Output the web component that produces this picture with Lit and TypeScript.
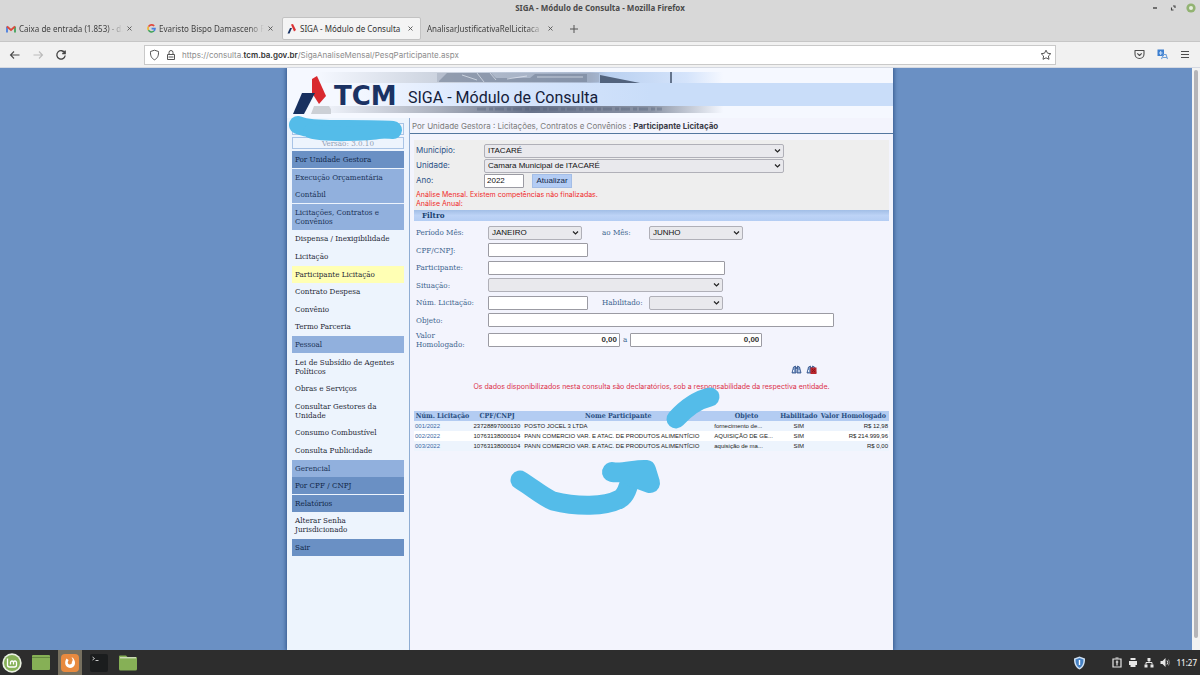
import { LitElement, html, css, svg, nothing } from "lit";
import { customElement, property } from "lit/decorators.js";
import { classMap } from "lit/directives/class-map.js";

const closeIcon = svg`<path d="M1.5 1.5l4 4M5.5 1.5l-4 4" fill="none" stroke="#555" stroke-width="0.9" />`;

@customElement("browser-chrome")
class BrowserChrome extends LitElement {
  static styles = css`
    :host { display: block; font: 8px/12px "Noto Sans", sans-serif; color: #3f3f3f; background: #d8d8d8; }
    .title { display: grid; grid-template-columns: 1fr auto 1fr; height: 16px; align-items: center; }
    .name { grid-column: 2; font-weight: 700; color: #4b4b4b; }
    .controls { display: flex; justify-content: flex-end; align-items: center; gap: 8px; padding-right: 4px; }
    .tabs { display: flex; height: 26px; align-items: center; box-sizing: border-box; border-bottom: 1px solid #c6c6c6; }
    .tab { display: flex; align-items: center; gap: 3px; height: 23px; width: 141px; padding: 0 8px 0 6px; box-sizing: border-box; }
    .tab.active { background: #f4f4f4; border: 1px solid #c2c2c2; border-radius: 2px; width: 139px; padding: 0 6px 0 4px; color: #333; }
    .tab svg { flex: none; }
    .label { flex: 1; white-space: nowrap; }
    .fade { mask-image: linear-gradient(to right, #000 85%, transparent); }
    .close, .icon { border: 0; padding: 0; background: none; display: flex; }
    .new { padding-left: 3px; }
    .bar { display: flex; align-items: center; height: 26px; background: #f1f1f1; padding: 0 10px 0 9px; box-sizing: border-box; border-bottom: 1px solid #d5d9e2; }
    .nav { display: flex; gap: 11px; width: 135px; }
    .address { flex: 1; display: flex; align-items: center; gap: 6px; height: 20px; background: #fff; border: 1px solid #c9c9c9; box-sizing: border-box; padding: 0 3px 0 4px; }
    .url { flex: 1; color: #8c8c8c; font-family: Inter, sans-serif; }
    .url b { color: #333; font-weight: 600; }
    .tools { display: flex; gap: 12px; width: 134px; box-sizing: border-box; justify-content: flex-end; }
  `;

  tab(icon: unknown, label: string, active = false, fade = true) {
    return html`<div class=${classMap({ tab: true, active })}>
      ${icon}<span class=${classMap({ label: true, fade })}>${label}</span>
      <button class="close" aria-label="Fechar aba"><svg width="7" height="7">${closeIcon}</svg></button>
    </div>`;
  }

  render() {
    const gmail = html`<svg width="10" height="8" viewBox="0 0 10 8"><path d="M1 7.5V1.5" stroke="#4a7fe0" stroke-width="1.8"/><path d="M9 7.5V1.5" stroke="#43a35b" stroke-width="1.8"/><path d="M1 1.5L5 5l4-3.5" fill="none" stroke="#dc4a3d" stroke-width="1.8"/></svg>`;
    const google = html`<svg width="9" height="9" viewBox="0 0 9 9" fill="none" stroke-width="1.6"><path d="M7.2 2A3.5 3.5 0 0 0 1.5 2.7" stroke="#e04a3f"/><path d="M1.5 2.7a3.5 3.5 0 0 0 0 3.5" stroke="#efb52d"/><path d="M1.5 6.2a3.5 3.5 0 0 0 5.4.8" stroke="#41a35a"/><path d="M6.9 7A3.4 3.4 0 0 0 8 4.6H4.6" stroke="#4a7fe0"/></svg>`;
    const siga = html`<svg width="10" height="10" viewBox="0 0 10 10"><path d="M4 0.5L6 0l3 6-2 1.5z" fill="#dc3133"/><path d="M3 4h2L2.5 9.5H0.5z" fill="#173264"/></svg>`;
    return html`
      <div class="title">
        <span class="name">SIGA - Módulo de Consulta - Mozilla Firefox</span>
        <div class="controls">
          <button class="icon" aria-label="Minimizar"><svg width="10" height="10"><path d="M3 5h4" stroke="#444" stroke-width="1.4"/></svg></button>
          <button class="icon" aria-label="Restaurar"><svg width="10" height="10"><path d="M3.5 4.500v2.500h2M5 3h2v2" fill="none" stroke="#444" stroke-width="1.1"/></svg></button>
          <button class="icon" aria-label="Fechar"><svg width="10" height="10"><circle cx="5" cy="5" r="4.6" fill="#92b372"/><circle cx="5" cy="5" r="2" fill="#e6eedd"/></svg></button>
        </div>
      </div>
      <div class="tabs">
        ${this.tab(gmail, "Caixa de entrada (1.853) - d.")}
        ${this.tab(google, "Evaristo Bispo Damasceno F")}
        ${this.tab(siga, "SIGA - Módulo de Consulta", true, false)}
        ${this.tab(nothing, "AnalisarJustificativaRelLicitaca")}
        <button class="icon new" aria-label="Nova aba"><svg width="16" height="12"><path d="M9 2v8M5 6h8" stroke="#555" stroke-width="1" /></svg></button>
      </div>
      <div class="bar">
        <div class="nav">
          <button class="icon" aria-label="Voltar"><svg width="12" height="12"><path d="M10.5 6H1.500M5 2.500L1.500 6 5 9.500" fill="none" stroke="#4a4a4a" stroke-width="1.1"/></svg></button>
          <button class="icon" aria-label="Avançar"><svg width="12" height="12"><path d="M1.500 6h9M7 2.500L10.500 6 7 9.500" fill="none" stroke="#bbb" stroke-width="1.1"/></svg></button>
          <button class="icon" aria-label="Recarregar"><svg width="12" height="12"><path d="M9.800 4A4.200 4.200 0 1 0 10.200 6.500M10.200 1.500V4.500H7.200" fill="none" stroke="#444" stroke-width="1.3"/></svg></button>
        </div>
        <div class="address">
          <svg width="11" height="12" viewBox="0 0 11 12"><path d="M5.500 1.200L9.500 2.500C9.700 6 9 9.200 5.500 10.800 2 9.200 1.300 6 1.500 2.500z" fill="none" stroke="#555" stroke-width="1"/></svg>
          <svg width="10" height="12" viewBox="0 0 10 12"><path d="M1.500 5.500h7v5h-7zM3 5.500V3.500a2 2 0 0 1 4 0v2M2.500 8h5" fill="none" stroke="#555" stroke-width="1"/></svg>
          <span class="url">https://consulta.<b>tcm.ba.gov.br</b>/SigaAnaliseMensal/PesqParticipante.aspx</span>
          <svg width="12" height="12" viewBox="0 0 12 12"><path d="M6 1.200l1.500 3 3.300.5-2.400 2.300.6 3.300L6 8.800l-3 1.500.6-3.300L1.200 4.700l3.300-.5z" fill="none" stroke="#555" stroke-width="1" stroke-linejoin="round"/></svg>
        </div>
        <div class="tools">
          <button class="icon" aria-label="Pocket"><svg width="11" height="11"><path d="M1 1.500h9v3.500a4.500 4.500 0 0 1-9 0zM3.300 4.300L5.500 6.500l2.200-2.200" fill="none" stroke="#4d4d4d" stroke-width="1.1" stroke-linejoin="round"/></svg></button>
          <button class="icon" aria-label="Traduzir"><svg width="11" height="11"><rect x="0.500" y="0.500" width="6.500" height="6.500" fill="#3d7fd0"/><path d="M2 4h3.500M3.700 2v4" stroke="#cfe2fa"/><path d="M4.500 10l2-4.500h2.500l1.500 4.500M6 8.500h4" fill="none" stroke="#6f9fd8" stroke-width="1.100"/></svg></button>
          <button class="icon" aria-label="Menu"><svg width="10" height="11"><path d="M1 2.500h8M1 5.500h8M1 8.500h8" stroke="#4d4d4d" stroke-width="1.100"/></svg></button>
        </div>
      </div>`;
  }
}

@customElement("task-bar")
class TaskBar extends LitElement {
  static styles = css`
    :host { display: flex; align-items: center; height: 25px; background: #2d2d2d; color: #eee; font: 500 8px/10px "Noto Sans", sans-serif; }
    .apps { display: flex; align-items: center; gap: 5px; flex: 1; }
    .app { display: flex; align-items: center; justify-content: center; width: 24px; height: 25px; border: 0; padding: 0; background: none; }
    .app.on { background: #77705f; }
    .tray { display: flex; align-items: center; gap: 6px; padding-right: 3px; }
    .shield { margin-right: 20px; }
    .clock { padding-left: 1px; }
  `;
  render() {
    const folder = html`<svg width="20" height="18" viewBox="0 0 20 18"><path d="M1 2.500q0-1 1-1h6l1.500 1.500H18q1 0 1 1V15q0 1.500-1.500 1.500h-15Q1 16.500 1 15z" fill="#86b056"/><path d="M2 3.800h16" stroke="#e8eee0" stroke-width="1"/></svg>`;
    return html`
      <div class="apps">
        <button class="app" aria-label="Menu"><svg width="20" height="20"><circle cx="10" cy="10" r="9.700" fill="#e9f0e1"/><circle cx="10" cy="10" r="8" fill="#87b158"/><path d="M5.500 5.500v6.500q0 2 2 2h5q2 0 2-2V9.500a1.500 1.500 0 0 0-3 0v2M11.500 9.500a1.500 1.500 0 0 0-3 0v2" fill="none" stroke="#fff" stroke-width="1.300"/></svg></button>
        <button class="app" aria-label="Área de trabalho"><svg width="20" height="18"><rect x="1" y="1" width="18" height="15" rx="1" fill="#86b056"/><path d="M1 3.500h18" stroke="#648940"/></svg></button>
        <button class="app on" aria-label="Firefox"><svg width="20" height="20"><rect x="1" y="1" width="18" height="18" rx="4" fill="#e88a3f"/><path d="M6.500 5.500C4 9 5 14.500 10 15c5-.5 6.500-5 3.500-9.500-.3-.5-1.200-1-2-1 1.500 1.500 1.500 3 .3 4.500 1 2-2.800 3.500-3.800 1.500C7.300 9 8.500 8 8.500 7z" fill="#fff"/></svg></button>
        <button class="app" aria-label="Terminal"><svg width="20" height="20"><rect x="1" y="1" width="18" height="18" rx="2" fill="#1b1d1e"/><path d="M3.500 4l2 1.500-2 1.500M6.500 7.500h3" fill="none" stroke="#ddd" stroke-width="0.900"/></svg></button>
        <button class="app" aria-label="Arquivos">${folder}</button>
      </div>
      <div class="tray">
        <svg class="shield" width="13" height="14"><path d="M6.500 0.500L12 2.500C12.200 8 10.500 11.500 6.500 13.500 2.500 11.500.8 8 1 2.500z" fill="#cfe0f2"/><path d="M6.500 2L10.500 3.500C10.500 7.500 9.500 10.300 6.500 12 3.500 10.300 2.500 7.500 2.500 3.500z" fill="#4581c4"/><path d="M6.500 4v5" stroke="#fff" stroke-width="1.400"/></svg>
        <svg width="10" height="11"><path d="M1 2h8v8H1z" fill="none" stroke="#e6e6e6" stroke-width="1.200"/><path d="M3.500 1h3M5 3.500v5M3.800 5h2.500" stroke="#e6e6e6" stroke-width="1.200"/></svg>
        <svg width="10" height="11"><path d="M2.500 1h5v2h-5zM1 4h8v4H1zM2.500 7h5v3h-5z" fill="#e6e6e6"/></svg>
        <svg width="10" height="11"><path d="M3.500 1h3v3h-3zM.5 7.500h3v3h-3zM6.500 7.500h3v3h-3z" fill="#e6e6e6"/><path d="M5 4v1.500M2 7.500v-2h6v2" fill="none" stroke="#e6e6e6"/></svg>
        <svg width="10" height="11"><path d="M.5 4h2l3-3v9l-3-3h-2z" fill="#e6e6e6"/><path d="M7 3.500q1.500 2 0 4" fill="none" stroke="#e6e6e6"/><path d="M8.500 2.500q2 3 0 6" fill="none" stroke="#888"/></svg>
        <span class="clock">11:27</span>
      </div>`;
  }
}

type Item = [string, "root" | "group" | "link" | "current"];
const MENU: Item[] = [
  ["Por Unidade Gestora", "root"],
  ["Execução Orçamentária", "group"],
  ["Contábil", "group"],
  ["Licitações, Contratos e Convênios", "group"],
  ["Dispensa / Inexigibilidade", "link"],
  ["Licitação", "link"],
  ["Participante Licitação", "current"],
  ["Contrato Despesa", "link"],
  ["Convênio", "link"],
  ["Termo Parceria", "link"],
  ["Pessoal", "group"],
  ["Lei de Subsídio de Agentes Políticos", "link"],
  ["Obras e Serviços", "link"],
  ["Consultar Gestores da Unidade", "link"],
  ["Consumo Combustível", "link"],
  ["Consulta Publicidade", "link"],
  ["Gerencial", "group"],
  ["Por CPF / CNPJ", "root"],
  ["Relatórios", "root"],
  ["Alterar Senha Jurisdicionado", "link"],
  ["Sair", "root"],
];

@customElement("side-menu")
class SideMenu extends LitElement {
  static styles = css`
    :host { display: block; padding: 5px 5px 0 5px; font: 8px/9px "DejaVu Serif Condensed", "DejaVu Serif", serif; }
    .box { border: 1px solid #a9c4e6; height: 12px; box-sizing: border-box; margin-bottom: 2px; text-align: center; color: #93a1b5; line-height: 11px; }
    .menu { list-style: none; margin: 0; padding: 0; height: 405px; display: flex; flex-direction: column; justify-content: space-between; }
    .item { display: block; padding: 4px 7px 4px 3px; color: #1f2937; text-decoration: none; }
    .root { background: #6a90c4; color: #12284a; }
    .group { background: #91b0dd; color: #1b3357; }
    .current { background: #ffffb4; }
  `;
  render() {
    return html`
      <div class="box"></div>
      <div class="box">Versão: 3.0.10</div>
      <ul class="menu">
        ${MENU.map(([label, kind]) => html`<li><a class="item ${kind}" href="#">${label}</a></li>`)}
      </ul>`;
  }
}

@customElement("site-banner")
class SiteBanner extends LitElement {
  static styles = css`
    :host { display: grid; grid-template-rows: 4px 11px 23px 7px 5px; background: #f5f8ff; }
    .sky { grid-row: 2; grid-column: 1; width: 100%; height: 11px; }
    .band { grid-row: 3; grid-column: 1; background: linear-gradient(to right, #f5f8ff 10%, #dbe8fd 30%, #c9ddf9 60%); }
    .road { grid-row: 4; grid-column: 1; width: 100%; height: 7px; }
    .brand { grid-row: 1 / 6; grid-column: 1; display: flex; align-items: center; padding: 6px 0 0 5px; }
    .tcm { width: 74px; padding: 0 0 1px 3px; font: 700 26px/24px "DejaVu Sans", sans-serif; color: #1b3263; }
    .app { margin: 0; font: 400 16px/20px Roboto, sans-serif; color: #14203a; padding: 3px 0 0 0; }
  `;
  render() {
    return html`
      <svg class="sky" viewBox="0 0 606 11" preserveAspectRatio="none" aria-hidden="true">
        <defs>
          <linearGradient id="a"><stop offset=".05" stop-color="#f5f8ff"/><stop offset=".25" stop-color="#ccd3df"/><stop offset=".5" stop-color="#a9b8d0"/><stop offset=".53" stop-color="#b9d0f0"/><stop offset=".66" stop-color="#d5e4fb"/><stop offset=".72" stop-color="#f5f8ff"/></linearGradient>
        </defs>
        <rect width="606" height="11" fill="url(#a)"/>
        <path d="M150 1h162v9H150z" fill="#8b98ad" opacity=".35"/>
        <path d="M152 9l8-8h44l5 5h34l5-4h52v8H152z" fill="#65738a" opacity=".45"/>
        <path d="M190 1l7 9M203 1l6 7M175 3l15 5M220 7l20-3M250 5h46" stroke="#eef3fb" stroke-width="1" opacity=".6"/>
        <path d="M313 3l40 8h-40z" fill="#52637d"/>
        <path d="M384 0v11" stroke="#64748c" stroke-width="2"/>
      </svg>
      <div class="band"></div>
      <svg class="road" viewBox="0 0 606 7" preserveAspectRatio="none" aria-hidden="true">
        <defs>
          <linearGradient id="b"><stop offset=".05" stop-color="#f5f8ff"/><stop offset=".25" stop-color="#aab0bd"/><stop offset=".4" stop-color="#68738a"/><stop offset=".6" stop-color="#8b94a5"/><stop offset=".72" stop-color="#f5f8ff"/></linearGradient>
        </defs>
        <rect width="606" height="7" fill="url(#b)"/>
        <path d="M190 3h185" stroke="#4f5d76" stroke-width="3" stroke-dasharray="9 3 4 2" opacity=".35"/>
      </svg>
      <div class="brand">
        <svg width="39" height="40" viewBox="0 0 39 40" aria-hidden="true">
          <path d="M20 3l5-3 9 20-7 8-7-11z" fill="#d9292f"/>
          <path d="M10 17h13L12 38H1z" fill="#18305f"/>
          <path d="M22 30h15l5 8H19z" fill="#ccd0d6"/>
        </svg>
        <span class="tcm">TCM</span>
        <h1 class="app">SIGA - Módulo de Consulta</h1>
      </div>`;
  }
}

@customElement("drop-down")
class DropDown extends LitElement {
  @property() label = "";
  @property() value = "";
  static styles = css`
    :host { display: inline-grid; vertical-align: middle; }
    .field { grid-area: 1 / 1; appearance: none; width: 100%; height: 14px; box-sizing: border-box; border: 1px solid #b0b0b8; border-radius: 2px; background: #e9e9ed; padding: 0 3px; font: 8px/10px "Liberation Sans", sans-serif; color: #111; }
    .arrow { grid-area: 1 / 1; justify-self: end; align-self: center; margin-right: 3px; pointer-events: none; }
  `;
  render() {
    return html`<select class="field" aria-label=${this.label}><option>${this.value}</option></select>
      <svg class="arrow" width="7" height="6"><path d="M1 1.500l2.500 2.500L6 1.500" fill="none" stroke="#222" stroke-width="1.200"/></svg>`;
  }
}

const ROWS = [
  ["001/2022", "23728897000130", "POSTO JOCEL 3 LTDA", "fornecimento de...", "SIM", "R$ 12,98"],
  ["002/2022", "10763138000104", "PANN COMERCIO VAR. E ATAC. DE PRODUTOS ALIMENTÍCIO", "AQUISIÇÃO DE GE...", "SIM", "R$ 214.999,96"],
  ["003/2022", "10763138000104", "PANN COMERCIO VAR. E ATAC. DE PRODUTOS ALIMENTÍCIO", "aquisição de ma...", "SIM", "R$ 0,00"],
];

@customElement("participant-page")
class ParticipantPage extends LitElement {
  static styles = css`
    :host { display: block; font: 8px/9px Inter, "Liberation Sans", sans-serif; color: #2b5186; }
    .crumbs { height: 15px; line-height: 16px; padding-left: 2px; border-bottom: 1px solid #54779f; color: #7b7b7b; }
    .crumbs b { color: #3c3c48; }
    .content { padding: 6px 4px 0 4px; }
    .unit { background: #eeeeee; padding: 3px 2px 0 2px; height: 70px; box-sizing: border-box; }
    .line { display: grid; grid-template-columns: 68px 1fr; align-items: center; height: 15px; }
    .group { display: flex; align-items: center; }
    .w300 { width: 300px; }
    .text { box-sizing: border-box; height: 14px; border: 1px solid #9b9ba3; border-radius: 1px; background: #fff; padding: 0 2px; font: 8px/10px "Liberation Sans", sans-serif; color: #111; }
    .money { text-align: right; font-weight: 700; color: #333; }
    .year { width: 40px; }
    .update { margin-left: 8px; width: 40px; height: 14px; padding: 0; border: 1px solid #a3bde6; background: #b3ccf4; font: 8px/10px "Liberation Sans", sans-serif; color: #14284a; }
    .alert { margin: 0; color: #f02a2a; font-size: 7px; line-height: 9px; }
    .alert.first { padding-top: 2px; }
    .heading { margin: 0; height: 11px; padding-left: 8px; font: 700 8px/11px "DejaVu Serif Condensed", "DejaVu Serif", serif; color: #17406f; background: linear-gradient(#a2bee6, #bdd3f6 50%, #b4cdf3); }
    .filter { padding: 3px 2px 0 2px; font: 8px/9px "DejaVu Serif Condensed", "DejaVu Serif", serif; color: #41658f; }
    .rows { display: grid; grid-template-rows: repeat(6, 1fr); height: 105px; }
    .row { display: grid; grid-template-columns: 66px 1fr; column-gap: 6px; align-items: center; }
    .second { box-sizing: border-box; padding-left: 14px; width: 61px; }
    .second.wide { padding-left: 20px; width: 67px; }
    .tall { height: 21px; }
    .w74 { width: 74px; } .w94 { width: 94px; } .w100 { width: 100px; } .w132 { width: 132px; } .w235 { width: 235px; } .w237 { width: 237px; } .w346 { width: 346px; }
    .to { padding: 0 3px; }
    .actions { display: flex; justify-content: flex-end; gap: 3px; padding: 14px 71px 6px 0; }
    .action { border: 0; padding: 0; background: none; display: flex; }
    .notice { margin: 0; text-align: center; color: #dc2f48; font-size: 7px; line-height: 12px; padding-bottom: 18px; }
    .grid { width: 100%; border-collapse: collapse; table-layout: fixed; font: 6px/10px "Liberation Sans", sans-serif; color: #222; white-space: nowrap; }
    .grid th { font: 700 7px/10px "DejaVu Serif Condensed", "DejaVu Serif", serif; color: #274c80; background: #b3ccf2; padding: 0; }
    .grid td { padding: 0 1px; height: 10px; }
    .grid tr { background: #edf4fd; }
    .grid tr:nth-child(even) { background: #ffffff; }
    .grid a { color: #3b6aa5; text-decoration: none; }
    .c { text-align: center; }
    .r { text-align: right; }
    .grid .doc { text-align: right; padding-right: 3px; }
  `;

  render() {
    const eyes = svg`<path d="M1 9l1.500-6 2-1 .5 7zM10 9L8.500 3l-2-1-.5 7z" fill="#7d9bc9" stroke="#2f4f87" stroke-width=".8"/><path d="M4.500 4h2" stroke="#2f4f87" stroke-width="1.500"/><path d="M2.500 6v2M8 6v2" stroke="#e5edf9" stroke-width="1"/>`;
    return html`
      <div class="crumbs">Por Unidade Gestora : Licitações, Contratos e Convênios : <b>Participante Licitação</b></div>
      <div class="content">
        <div class="unit">
          <div class="line"><label>Município:</label><drop-down class="w300" label="Município" value="ITACARÉ"></drop-down></div>
          <div class="line"><label>Unidade:</label><drop-down class="w300" label="Unidade" value="Camara Municipal de ITACARÉ"></drop-down></div>
          <div class="line"><label for="ano">Ano:</label><div class="group"><input id="ano" class="text year" .value=${"2022"} /><button class="update">Atualizar</button></div></div>
          <p class="alert first">Análise Mensal. Existem competências não finalizadas.</p>
          <p class="alert">Análise Anual:</p>
        </div>
        <h2 class="heading">Filtro</h2>
        <div class="filter">
          <div class="rows">
            <div class="row"><label>Período Mês:</label><div class="group"><drop-down class="w94" label="Período Mês" value="JANEIRO"></drop-down><label class="second wide">ao Mês:</label><drop-down class="w94" label="ao Mês" value="JUNHO"></drop-down></div></div>
            <div class="row"><label for="cpf">CPF/CNPJ:</label><div class="group"><input id="cpf" class="text w100" /></div></div>
            <div class="row"><label for="part">Participante:</label><div class="group"><input id="part" class="text w237" /></div></div>
            <div class="row"><label>Situação:</label><div class="group"><drop-down class="w235" label="Situação"></drop-down></div></div>
            <div class="row"><label for="num">Núm. Licitação:</label><div class="group"><input id="num" class="text w100" /><label class="second">Habilitado:</label><drop-down class="w74" label="Habilitado"></drop-down></div></div>
            <div class="row"><label for="obj">Objeto:</label><div class="group"><input id="obj" class="text w346" /></div></div>
          </div>
          <div class="row tall"><label for="de">Valor Homologado:</label><div class="group"><input id="de" class="text money w132" .value=${"0,00"} /><label class="to" for="ate">a</label><input id="ate" class="text money w132" .value=${"0,00"} /></div></div>
        </div>
        <div class="actions">
          <button class="action" aria-label="Pesquisar"><svg width="12" height="11">${eyes}</svg></button>
          <button class="action" aria-label="Limpar pesquisa"><svg width="12" height="11">${eyes}<rect x="4.500" y="3.500" width="6" height="6.500" fill="#b8252c"/><path d="M6 5l3 3M9 5L6 8" stroke="#8b141b"/></svg></button>
        </div>
        <p class="notice">Os dados disponibilizados nesta consulta são declaratórios, sob a responsabilidade da respectiva entidade.</p>
        <table class="grid">
          <colgroup><col style="width:12%" /><col style="width:11%" /><col style="width:40%" /><col style="width:14%" /><col style="width:8%" /><col /></colgroup>
          <thead><tr><th>Núm. Licitação</th><th>CPF/CNPJ</th><th>Nome Participante</th><th>Objeto</th><th>Habilitado</th><th>Valor Homologado</th></tr></thead>
          <tbody>
            ${ROWS.map((r) => html`<tr><td><a href="#">${r[0]}</a></td><td class="doc">${r[1]}</td><td>${r[2]}</td><td>${r[3]}</td><td class="c">${r[4]}</td><td class="r">${r[5]}</td></tr>`)}
          </tbody>
        </table>
      </div>`;
  }
}

@customElement("app-root")
class AppRoot extends LitElement {
  static styles = css`
    :host { display: flex; flex-direction: column; min-height: 100vh; }
    .view { flex: 1; display: flex; background: #6a90c4; }
    .stage { flex: 1; display: flex; justify-content: center; padding-right: 12px; }
    .sheet { position: relative; width: 100%; max-width: 606px; display: flex; flex-direction: column; background: #f3f4fd; box-shadow: 0 0 4px 1px #34588c; clip-path: inset(0 -6px); }
    .cols { flex: 1; display: grid; grid-template-columns: 123px 1fr; }
    .side { background: #edf4fd; border-right: 1px solid #8fadd3; }
    .marks { position: absolute; left: 0; top: 0; pointer-events: none; }
    .scroll { width: 8px; background: #f2f2f2; display: flex; justify-content: center; padding-top: 2px; box-sizing: border-box; }
    .thumb { width: 4px; height: 568px; border-radius: 2px; background: #b4b4b8; }
  `;
  render() {
    return html`
      <browser-chrome></browser-chrome>
      <div class="view">
        <div class="stage">
          <main class="sheet">
            <site-banner></site-banner>
            <div class="cols">
              <side-menu class="side"></side-menu>
              <participant-page></participant-page>
            </div>
            <svg class="marks" width="606" height="460" viewBox="0 0 606 460" fill="none" stroke="#54bce9" stroke-linecap="round" stroke-linejoin="round" aria-hidden="true">
              <path d="M11 57C22 62 45 61 60 61S95 61 106 62" stroke-width="18"/>
              <path d="M24 63C36 67 80 66 95 63" stroke-width="15"/>
              <path d="M389 351C398 341 410 332 423 329" stroke-width="19"/>
              <path d="M233 412C246 420 256 429 266 433C290 439 318 439 333 431C341 426 342 414 345 405" stroke-width="19"/>
              <path d="M325 404C335 406 350 401 359 402L363 415L344 408" stroke-width="20"/>
            </svg>
          </main>
        </div>
        <div class="scroll"><div class="thumb"></div></div>
      </div>
      <task-bar></task-bar>`;
  }
}
